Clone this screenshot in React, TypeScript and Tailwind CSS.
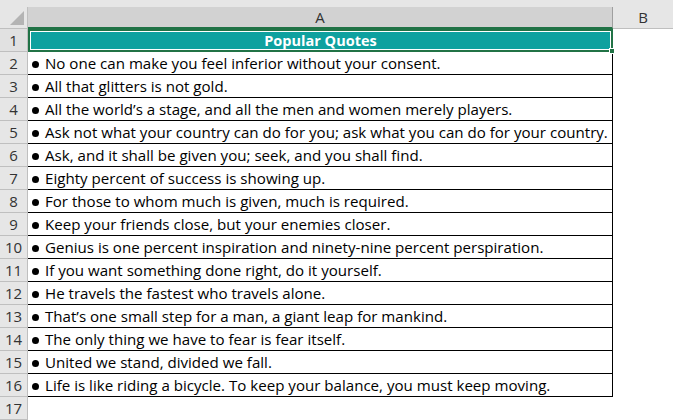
import React from 'react';

const quotes = [
  'No one can make you feel inferior without your consent.',
  'All that glitters is not gold.',
  'All the world\u2019s a stage, and all the men and women merely players.',
  'Ask not what your country can do for you; ask what you can do for your country.',
  'Ask, and it shall be given you; seek, and you shall find.',
  'Eighty percent of success is showing up.',
  'For those to whom much is given, much is required.',
  'Keep your friends close, but your enemies closer.',
  'Genius is one percent inspiration and ninety-nine percent perspiration.',
  'If you want something done right, do it yourself.',
  'He travels the fastest who travels alone.',
  'That\u2019s one small step for a man, a giant leap for mankind.',
  'The only thing we have to fear is fear itself.',
  'United we stand, divided we fall.',
  'Life is like riding a bicycle. To keep your balance, you must keep moving.',
];

const font = { fontFamily: '"Open Sans", "Liberation Sans", sans-serif' };

const RowHeader: React.FC<{ n: number }> = ({ n }) => (
  <div className="w-[28px] shrink-0 h-full bg-[#e6e6e6] border-b border-r border-[#bfbfbf] flex items-center justify-center text-[15px] text-[#333]">
    {n}
  </div>
);

export default function App() {
  return (
    <div className="w-[673px] h-[420px] overflow-hidden bg-white text-black" style={font}>
      {/* top strip */}
      <div className="h-[7px] bg-[#e6e6e6]" />

      {/* column headers */}
      <div className="flex h-[22px]">
        <div className="w-[28px] shrink-0 bg-[#e6e6e6] border-r border-[#bfbfbf] border-b flex items-end justify-end p-[3px]">
          <svg width="14" height="14" viewBox="0 0 14 14">
            <polygon points="14,0 14,14 0,14" fill="#b4b4b4" />
          </svg>
        </div>
        <div className="w-[585px] shrink-0 bg-[#d2d2d2] border-r border-[#9f9f9f] border-b-2 border-b-[#217346] flex items-center justify-center text-[15px] text-[#333]">
          A
        </div>
        <div className="flex-1 bg-[#e6e6e6] border-b border-[#bfbfbf] flex items-center justify-center text-[15px] text-[#333]">
          B
        </div>
      </div>

      {/* row 1 */}
      <div className="flex h-[23px]">
        <div className="w-[28px] shrink-0 h-full bg-[#e1e1e1] border-b border-r border-[#bfbfbf] flex items-center justify-center text-[15px] text-[#333]">
          1
        </div>
        <div className="relative w-[585px] shrink-0 h-full border-2 border-[#217346]">
          <div className="h-full border border-white bg-[#0ea19f] flex items-center justify-center text-white font-bold text-[14.5px]">
            Popular Quotes
          </div>
          <div className="absolute right-[-4px] bottom-[-4px] w-[6px] h-[6px] bg-[#217346] border border-white" />
        </div>
        <div className="flex-1" />
      </div>

      {quotes.map((q, i) => (
        <div key={i} className="flex h-[23px]">
          <RowHeader n={i + 2} />
          <div className="w-[585px] shrink-0 h-full border-b border-r border-black flex items-center pl-[4px] text-[15.1px] whitespace-nowrap overflow-hidden">
            <span className="inline-block w-[7px] h-[7px] rounded-full bg-black mr-[6px] mt-[2px] shrink-0" />
            {q}
          </div>
          <div className="flex-1" />
        </div>
      ))}

      <div className="flex h-[23px]">
        <RowHeader n={17} />
        <div className="flex-1" />
      </div>
    </div>
  );
}
